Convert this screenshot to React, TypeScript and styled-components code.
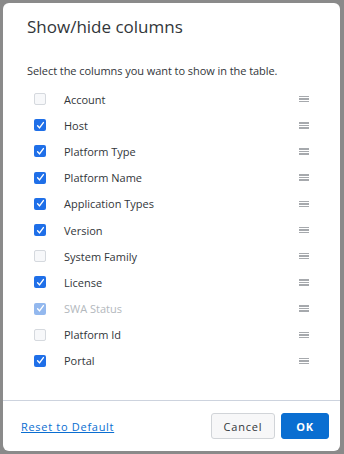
import React, { useState } from "react";
import styled, { createGlobalStyle } from "styled-components";

const Global = createGlobalStyle`
  html, body { margin: 0; padding: 0; }
  body {
    background: #8a8a8a;
    font-family: "Open Sans", "Noto Sans", sans-serif;
    width: 344px;
    height: 454px;
    overflow: hidden;
  }
`;

const Page = styled.div`
  padding: 3px 4px 3px 3px;
  box-sizing: border-box;
  height: 454px;
`;

const Dialog = styled.div`
  background: #fff;
  border-radius: 6px;
  height: 448px;
  display: flex;
  flex-direction: column;
  box-sizing: border-box;
`;

const Title = styled.h2`
  margin: 0;
  padding: 12px 24px 0 24px;
  font-size: 17px;
  font-weight: 400;
  color: #32363a;
  line-height: 24px;
`;

const Intro = styled.p`
  margin: 0;
  padding: 24px 24px 0 24px;
  font-size: 11px;
  line-height: 16px;
  letter-spacing: -0.06px;
  color: #32363a;
`;

const List = styled.ul`
  list-style: none;
  margin: 0;
  padding: 7px 0 0 0;
  flex: 1;
`;

const Row = styled.li`
  height: 26.2px;
  display: flex;
  align-items: center;
  padding: 0 31px 0 31px;
`;

const Box = styled.span<{ $checked: boolean; $disabled?: boolean }>`
  width: 12px;
  height: 12px;
  box-sizing: border-box;
  border-radius: 2px;
  border: 1px solid ${(p) => (p.$checked ? "transparent" : "#d5d9de")};
  background: ${(p) =>
    p.$checked ? (p.$disabled ? "#93b8ee" : "#1f6fe8") : "#f7f8fa"};
  display: flex;
  align-items: center;
  justify-content: center;
  flex: none;
`;

const Label = styled.span<{ $disabled?: boolean }>`
  margin-left: 18px;
  font-size: 11px;
  color: ${(p) => (p.$disabled ? "#b3b8bd" : "#32363a")};
  flex: 1;
`;

const Handle = styled.span`
  width: 10px;
  display: flex;
  flex-direction: column;
  gap: 1px;
  flex: none;
  & > i {
    display: block;
    height: 1.5px;
    background: #a6a9ad;
  }
`;

const Footer = styled.div`
  border-top: 1px solid #cdd3de;
  height: 51px;
  box-sizing: border-box;
  display: flex;
  align-items: center;
  padding: 0 11px 0 18px;
  gap: 6px;
`;

const ResetLink = styled.a`
  font-size: 11px;
  color: #0a6ed1;
  text-decoration: underline;
  letter-spacing: 0.7px;
  flex: 1;
  cursor: pointer;
`;

const Button = styled.button<{ $primary?: boolean }>`
  height: 26px;
  box-sizing: border-box;
  border-radius: 3px;
  font-family: "Open Sans", "Noto Sans", sans-serif;
  font-size: 11px;
  letter-spacing: 0.8px;
  padding: 0;
  width: ${(p) => (p.$primary ? "48px" : "64px")};
  border: 1px solid ${(p) => (p.$primary ? "#0a6ed1" : "#d1d4d8")};
  background: ${(p) => (p.$primary ? "#0a6ed1" : "#f7f7f8")};
  color: ${(p) => (p.$primary ? "#fff" : "#32363a")};
  font-weight: ${(p) => (p.$primary ? 700 : 400)};
`;

const Check = () => (
  <svg width="9" height="9" viewBox="0 0 9 9">
    <path d="M1.6 4.8 L3.5 6.9 L7.4 1.6" fill="none" stroke="#fff" strokeWidth="1.4" strokeLinecap="round" strokeLinejoin="round" />
  </svg>
);

const initial = [
  { name: "Account", checked: false },
  { name: "Host", checked: true },
  { name: "Platform Type", checked: true },
  { name: "Platform Name", checked: true },
  { name: "Application Types", checked: true },
  { name: "Version", checked: true },
  { name: "System Family", checked: false },
  { name: "License", checked: true },
  { name: "SWA Status", checked: true, disabled: true },
  { name: "Platform Id", checked: false },
  { name: "Portal", checked: true },
];

export default function App() {
  const [cols, setCols] = useState(initial);
  const toggle = (i: number) =>
    setCols((c) =>
      c.map((x, j) => (j === i && !x.disabled ? { ...x, checked: !x.checked } : x))
    );
  return (
    <Page>
      <Global />
      <Dialog>
        <Title>Show/hide columns</Title>
        <Intro>Select the columns you want to show in the table.</Intro>
        <List>
          {cols.map((c, i) => (
            <Row key={c.name} onClick={() => toggle(i)}>
              <Box $checked={c.checked} $disabled={c.disabled}>
                {c.checked && <Check />}
              </Box>
              <Label $disabled={c.disabled}>{c.name}</Label>
              <Handle>
                <i />
                <i />
                <i />
              </Handle>
            </Row>
          ))}
        </List>
        <Footer>
          <ResetLink onClick={() => setCols(initial)}>Reset to Default</ResetLink>
          <Button>Cancel</Button>
          <Button $primary>OK</Button>
        </Footer>
      </Dialog>
    </Page>
  );
}
